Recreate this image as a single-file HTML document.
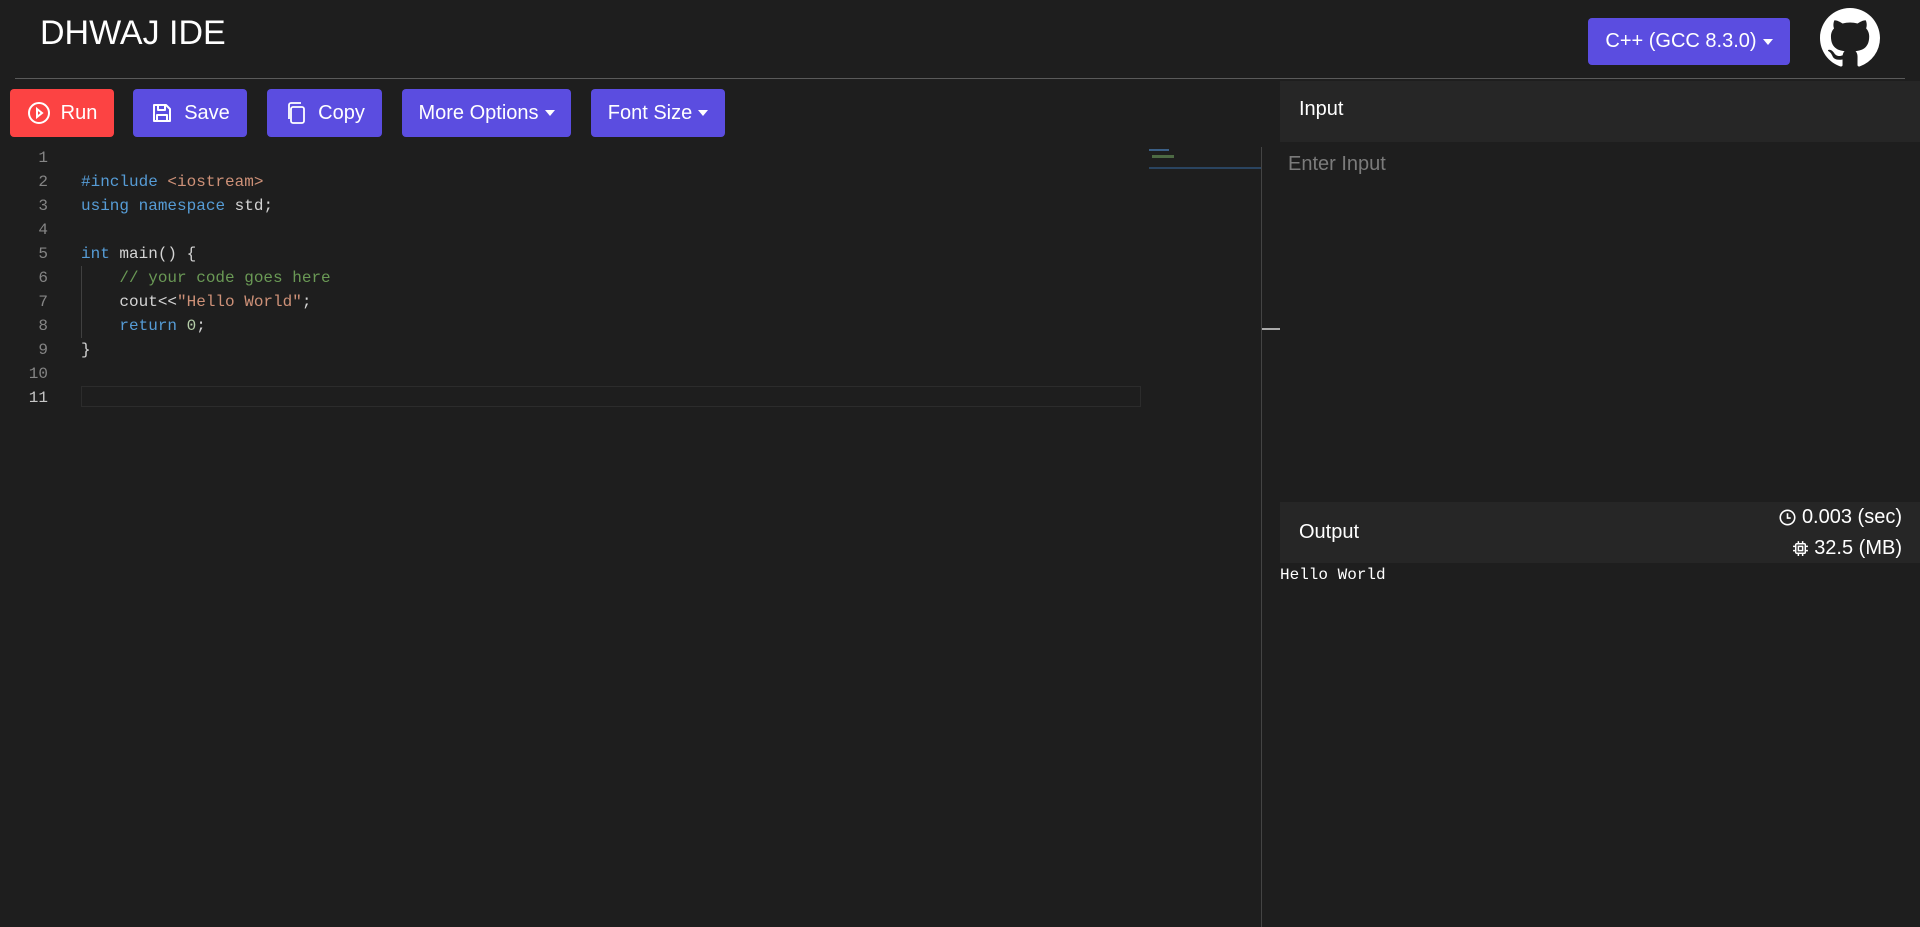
<!DOCTYPE html>
<html><head><meta charset="utf-8">
<style>
*{box-sizing:border-box;margin:0;padding:0}
body{width:1920px;height:927px;background:#1e1e1e;font-family:"Liberation Sans",Arial,sans-serif;color:#fff;position:relative;overflow:hidden}
.abs{position:absolute}
.title{left:40px;top:14px;font-size:34px;color:#fff}
.hr{left:15px;top:78px;width:1890px;height:1px;background:#5a5a5a}
.btn{position:absolute;top:89px;height:48px;border-radius:4px;background:#5b4de0;color:#fff;font-size:20px;display:flex;align-items:center;justify-content:center;gap:10px}
.caret{display:inline-block;width:0;height:0;border-left:5px solid transparent;border-right:5px solid transparent;border-top:6px solid #fff;margin-left:-4px}
.code{font-family:"Liberation Mono",monospace;font-size:16px;line-height:24px;position:absolute}
.ln{left:0;top:146px;width:48px;text-align:right;color:#858585}
.src{left:81px;top:146px;color:#d4d4d4;white-space:pre}
.k{color:#569cd6}.s{color:#ce9178}.c{color:#6a9955}.n{color:#b5cea8}
</style></head><body>
<div class="abs title">DHWAJ IDE</div>
<div class="abs hr"></div>

<div class="btn" style="left:10px;width:104px;background:#fc4343">
<svg width="24" height="24" viewBox="0 0 24 24" fill="none" stroke="#fff" stroke-width="2"><circle cx="12" cy="12" r="10"/><path d="M10 8l5 4-5 4z"/></svg>Run</div>
<div class="btn" style="left:133px;width:114px">
<svg width="24" height="24" viewBox="0 0 24 24" fill="none" stroke="#fff" stroke-width="2" stroke-linejoin="round"><path d="M4 4h12l4 4v12H4z"/><path d="M8 4v5h7V4"/><path d="M7 20v-6h10v6"/></svg>Save</div>
<div class="btn" style="left:267px;width:115px">
<svg width="24" height="24" viewBox="0 0 24 24" fill="none" stroke="#fff" stroke-width="1.8"><rect x="7" y="6" width="13" height="16" rx="2"/><path d="M5 18V4a2 2 0 0 1 2-2h10"/></svg>Copy</div>
<div class="btn" style="left:402px;width:169px">More Options <span class="caret"></span></div>
<div class="btn" style="left:591px;width:134px">Font Size <span class="caret"></span></div>

<div class="btn" style="left:1588px;top:18px;width:202px;height:47px">C++ (GCC 8.3.0) <span class="caret"></span></div>
<svg class="abs" style="left:1820px;top:8px" width="60" height="60" viewBox="0 0 16 16"><path fill="#fff" d="M8 0C3.58 0 0 3.580 0 8c0 3.54 2.29 6.53 5.47 7.59.4.07.55-.17.55-.38 0-.19-.01-.82-.01-1.490-2.010.37-2.53-.49-2.69-.94-.09-.23-.48-.94-.82-1.13-.28-.15-.68-.52-.01-.53.63-.01 1.080.58 1.230.82.72 1.21 1.87.87 2.330.66.07-.52.28-.87.51-1.07-1.78-.2-3.64-.89-3.64-3.95 0-.87.31-1.59.82-2.15-.08-.2-.36-1.020.08-2.12 0 0 .67-.21 2.200.82.64-.18 1.32-.27 2-.27.68 0 1.36.09 2 .27 1.53-1.04 2.2-.82 2.2-.82.44 1.1.16 1.92.08 2.12.51.56.82 1.270.82 2.15 0 3.07-1.87 3.75-3.65 3.95.29.25.54.73.54 1.48 0 1.07-.01 1.93-.01 2.2 0 .21.15.46.55.38A8.013 8.013 0 0016 8c0-4.42-3.58-8-8-8z"/></svg>

<div class="code ln">1<br>2<br>3<br>4<br>5<br>6<br>7<br>8<br>9<br>10<br><span style="color:#c6c6c6">11</span></div>
<div class="abs" style="left:81px;top:386px;width:1060px;height:21px;border:1px solid #2c2c2c"></div>
<div class="abs" style="left:81px;top:266px;width:1px;height:72px;background:#404040"></div>
<div class="code src">
<span class="k">#include</span> <span class="s">&lt;iostream&gt;</span>
<span class="k">using</span> <span class="k">namespace</span> std;

<span class="k">int</span> main() {
    <span class="c">// your code goes here</span>
    cout&lt;&lt;<span class="s">"Hello World"</span>;
    <span class="k">return</span> <span class="n">0</span>;
}
</div>
<div class="abs" style="left:1149px;top:149px;width:20px;height:2px;background:#3b5f86"></div>
<div class="abs" style="left:1152px;top:155px;width:22px;height:3px;background:#4d6a44"></div>
<div class="abs" style="left:1149px;top:167px;width:112px;height:2px;background:#2a4460"></div>
<div class="abs" style="left:1261px;top:147px;width:1px;height:780px;background:#444"></div>
<div class="abs" style="left:1262px;top:328px;width:18px;height:2px;background:#aaa"></div>

<div class="abs" style="left:1280px;top:81px;width:640px;height:61px;background:#262626"></div>
<div class="abs" style="left:1299px;top:98px;font-size:20px">Input</div>
<div class="abs" style="left:1288px;top:153px;font-size:20px;color:#7b7b7b">Enter Input</div>

<div class="abs" style="left:1280px;top:502px;width:640px;height:61px;background:#262626"></div>
<div class="abs" style="left:1299px;top:521px;font-size:20px">Output</div>
<div class="abs" style="right:18px;top:506px;font-size:20px;display:flex;align-items:center;gap:6px">
<svg width="17" height="17" viewBox="0 0 16 16" fill="none" stroke="#fff" stroke-width="1.5"><circle cx="8" cy="8" r="6.8"/><path d="M8 4v4.5h3"/></svg>0.003 (sec)</div>
<div class="abs" style="right:18px;top:537px;font-size:20px;display:flex;align-items:center;gap:5px">
<svg width="17" height="17" viewBox="0 0 16 16" fill="none" stroke="#fff" stroke-width="1.4"><rect x="3.5" y="3.5" width="9" height="9" rx="1"/><rect x="6" y="6" width="4" height="4"/><path d="M6 1v2M10 1v2M6 13v2M10 13v2M1 6h2M1 10h2M13 6h2M13 10h2"/></svg>32.5 (MB)</div>
<div class="abs" style="left:1280px;top:566px;font-family:'Liberation Mono',monospace;font-size:16px;color:#fff">Hello World</div>
</body></html>
